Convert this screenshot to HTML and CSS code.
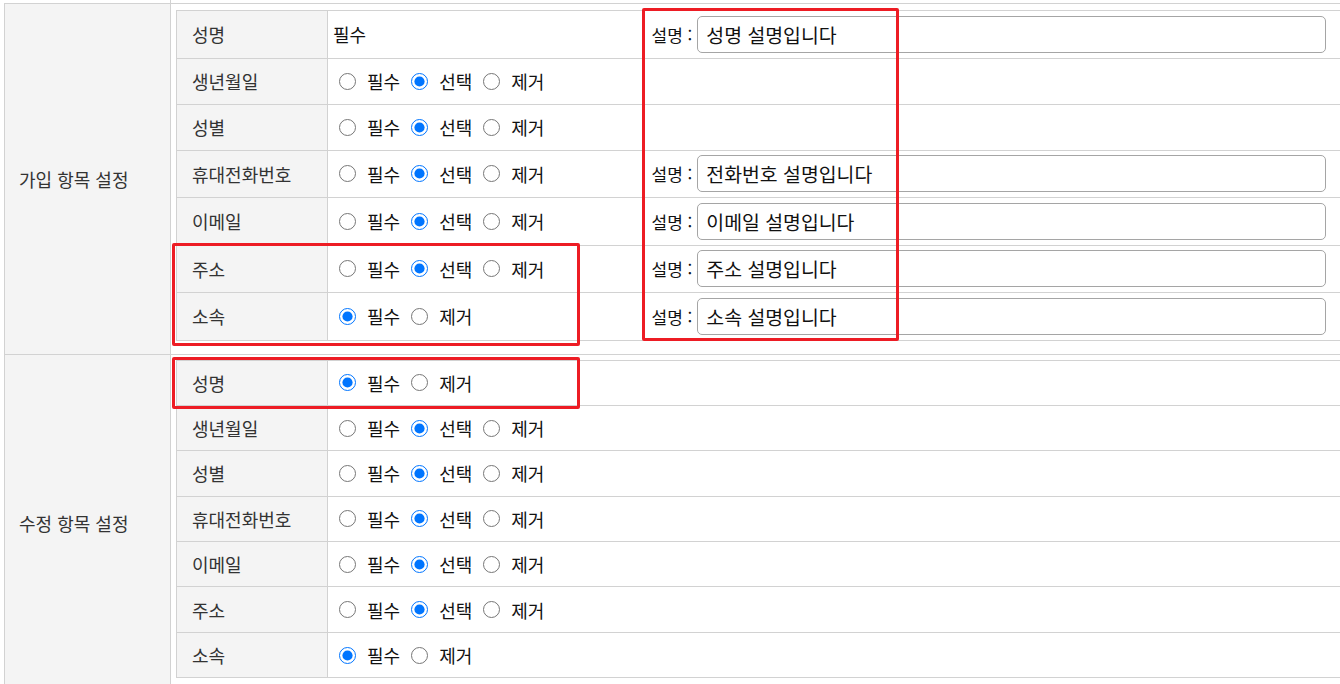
FILE: index.html
```
<!DOCTYPE html>
<html lang="ko">

<head>
    <meta charset="UTF-8">
    <title>회원 항목 설정</title>
    <link rel="stylesheet" href="styles.css">
</head>

<body>
    <div class="page">
        <table class="setting">
            <colgroup>
                <col class="col-head">
                <col>
            </colgroup>
            <tr class="prev">
                <td class="prev-head"></td>
                <td></td>
            </tr>
            <!-- 가입 항목 -->
            <tr>
                <th class="section">가입 항목 설정</th>
                <td class="section-body">
                    <table class="fields">
                        <colgroup>
                            <col class="col-label">
                            <col class="col-opt">
                            <col>
                        </colgroup>
                        <tr class="with-desc">
                            <th>성명</th>
                            <td class="opt"><span class="fixed">필수</span></td>
                            <td class="desc"><div class="desc-line"><span>설명 :</span><input type="text" value="성명 설명입니다"></div></td>
                        </tr>
                        <tr>
                            <th>생년월일</th>
                            <td class="opt">
                                <div class="opts">
                                    <label class="choice"><input type="radio" name="j_birth">필수</label>
                                    <label class="choice"><input type="radio" name="j_birth" checked>선택</label>
                                    <label class="choice"><input type="radio" name="j_birth">제거</label>
                                </div>
                            </td>
                            <td class="desc"></td>
                        </tr>
                        <tr>
                            <th>성별</th>
                            <td class="opt">
                                <div class="opts">
                                    <label class="choice"><input type="radio" name="j_sex">필수</label>
                                    <label class="choice"><input type="radio" name="j_sex" checked>선택</label>
                                    <label class="choice"><input type="radio" name="j_sex">제거</label>
                                </div>
                            </td>
                            <td class="desc"></td>
                        </tr>
                        <tr class="with-desc">
                            <th>휴대전화번호</th>
                            <td class="opt">
                                <div class="opts">
                                    <label class="choice"><input type="radio" name="j_phone">필수</label>
                                    <label class="choice"><input type="radio" name="j_phone" checked>선택</label>
                                    <label class="choice"><input type="radio" name="j_phone">제거</label>
                                </div>
                            </td>
                            <td class="desc"><div class="desc-line"><span>설명 :</span><input type="text" value="전화번호 설명입니다"></div></td>
                        </tr>
                        <tr class="with-desc">
                            <th>이메일</th>
                            <td class="opt">
                                <div class="opts">
                                    <label class="choice"><input type="radio" name="j_mail">필수</label>
                                    <label class="choice"><input type="radio" name="j_mail" checked>선택</label>
                                    <label class="choice"><input type="radio" name="j_mail">제거</label>
                                </div>
                            </td>
                            <td class="desc"><div class="desc-line"><span>설명 :</span><input type="text" value="이메일 설명입니다"></div></td>
                        </tr>
                        <tr class="with-desc">
                            <th>주소</th>
                            <td class="opt">
                                <div class="opts">
                                    <label class="choice"><input type="radio" name="j_addr">필수</label>
                                    <label class="choice"><input type="radio" name="j_addr" checked>선택</label>
                                    <label class="choice"><input type="radio" name="j_addr">제거</label>
                                </div>
                            </td>
                            <td class="desc"><div class="desc-line"><span>설명 :</span><input type="text" value="주소 설명입니다"></div></td>
                        </tr>
                        <tr class="with-desc">
                            <th>소속</th>
                            <td class="opt">
                                <div class="opts">
                                    <label class="choice"><input type="radio" name="j_org" checked>필수</label>
                                    <label class="choice"><input type="radio" name="j_org">제거</label>
                                </div>
                            </td>
                            <td class="desc"><div class="desc-line"><span>설명 :</span><input type="text" value="소속 설명입니다"></div></td>
                        </tr>
                    </table>
                </td>
            </tr>
            <!-- 수정 항목 -->
            <tr>
                <th class="section">수정 항목 설정</th>
                <td class="section-body section-edit">
                    <table class="fields edit">
                        <colgroup>
                            <col class="col-label">
                            <col>
                        </colgroup>
                        <tr>
                            <th>성명</th>
                            <td class="opt">
                                <div class="opts">
                                    <label class="choice"><input type="radio" name="e_name" checked>필수</label>
                                    <label class="choice"><input type="radio" name="e_name">제거</label>
                                </div>
                            </td>
                        </tr>
                        <tr>
                            <th>생년월일</th>
                            <td class="opt">
                                <div class="opts">
                                    <label class="choice"><input type="radio" name="e_birth">필수</label>
                                    <label class="choice"><input type="radio" name="e_birth" checked>선택</label>
                                    <label class="choice"><input type="radio" name="e_birth">제거</label>
                                </div>
                            </td>
                        </tr>
                        <tr>
                            <th>성별</th>
                            <td class="opt">
                                <div class="opts">
                                    <label class="choice"><input type="radio" name="e_sex">필수</label>
                                    <label class="choice"><input type="radio" name="e_sex" checked>선택</label>
                                    <label class="choice"><input type="radio" name="e_sex">제거</label>
                                </div>
                            </td>
                        </tr>
                        <tr>
                            <th>휴대전화번호</th>
                            <td class="opt">
                                <div class="opts">
                                    <label class="choice"><input type="radio" name="e_phone">필수</label>
                                    <label class="choice"><input type="radio" name="e_phone" checked>선택</label>
                                    <label class="choice"><input type="radio" name="e_phone">제거</label>
                                </div>
                            </td>
                        </tr>
                        <tr>
                            <th>이메일</th>
                            <td class="opt">
                                <div class="opts">
                                    <label class="choice"><input type="radio" name="e_mail">필수</label>
                                    <label class="choice"><input type="radio" name="e_mail" checked>선택</label>
                                    <label class="choice"><input type="radio" name="e_mail">제거</label>
                                </div>
                            </td>
                        </tr>
                        <tr>
                            <th>주소</th>
                            <td class="opt">
                                <div class="opts">
                                    <label class="choice"><input type="radio" name="e_addr">필수</label>
                                    <label class="choice"><input type="radio" name="e_addr" checked>선택</label>
                                    <label class="choice"><input type="radio" name="e_addr">제거</label>
                                </div>
                            </td>
                        </tr>
                        <tr>
                            <th>소속</th>
                            <td class="opt">
                                <div class="opts">
                                    <label class="choice"><input type="radio" name="e_org" checked>필수</label>
                                    <label class="choice"><input type="radio" name="e_org">제거</label>
                                </div>
                            </td>
                        </tr>
                    </table>
                </td>
            </tr>
        </table>

        <!-- 표시 박스 -->
        <div class="mark mark-desc"></div>
        <div class="mark mark-addr"></div>
        <div class="mark mark-edit"></div>
    </div>
</body>

</html>
```

FILE: styles.css
```
html,
body {
    overflow: hidden;
}

body {
    margin: 0;
    background-color: #fff;
    color: #111;
    font-family: "Noto Sans CJK KR", "Noto Sans", sans-serif;
    font-size: 18px;
}

.page {
    position: relative;
}

.setting {
    border-collapse: collapse;
    table-layout: fixed;
    width: 1420px;
    margin-left: 4px;
}

.col-head {
    width: 166px;
}

.setting .prev td {
    height: 3px;
    padding: 0;
    border-bottom: 1px solid #d2d2d2;
}

.setting .prev .prev-head {
    border-right: 1px solid #d2d2d2;
}

.section {
    padding: 0 0 0 14px;
    background-color: #f4f4f4;
    border: 1px solid #d2d2d2;
    color: #333;
    font-weight: normal;
    text-align: left;
    vertical-align: middle;
}

.section-body {
    padding: 6px 0 13px 5px;
    border: 1px solid #d2d2d2;
    vertical-align: top;
}

.section-body.section-edit {
    padding-top: 5px;
}

.fields {
    border-collapse: collapse;
    table-layout: fixed;
    width: 100%;
}

.col-label {
    width: 151px;
}

.col-opt {
    width: 316px;
}

.fields th,
.fields td {
    padding: 0;
    border-top: 1px solid #d2d2d2;
    border-bottom: 1px solid #d2d2d2;
    vertical-align: middle;
}

.fields th {
    padding-left: 15px;
    background-color: #f4f4f4;
    border-left: 1px solid #d2d2d2;
    border-right: 1px solid #d2d2d2;
    color: #333;
    font-weight: normal;
    text-align: left;
}

.fields tr {
    height: 46px;
}

.fields tr.with-desc {
    height: 47.5px;
}

.fields.edit tr {
    height: 45.4px;
}

.fields .opt {
    padding-left: 5px;
}

.opts {
    display: flex;
    align-items: center;
}

.choice {
    display: flex;
    align-items: center;
    margin-right: 5px;
}

.choice input[type="radio"] {
    width: 17px;
    height: 17px;
    margin: 0 11px 0 6px;
}

.fields .desc {
    padding-left: 8px;
}

.desc-line {
    display: flex;
    align-items: center;
    padding: 4px 0;
    font-size: 17px;
}

.desc-line span {
    margin-right: 5px;
}

.desc-line input[type="text"] {
    box-sizing: border-box;
    width: 629px;
    height: 37px;
    padding: 0 8px;
    border: 1px solid #a5a5a5;
    border-radius: 5px;
    outline: none;
    color: #111;
    font-family: "Noto Sans CJK KR", "Noto Sans", sans-serif;
    font-size: 19.4px;
}

/* 강조 표시 */
.mark {
    position: absolute;
    box-sizing: border-box;
    border: 3px solid #ed1c24;
    border-radius: 2px;
    pointer-events: none;
}

.mark-desc {
    left: 642px;
    top: 8px;
    width: 257px;
    height: 333px;
}

.mark-addr {
    left: 172px;
    top: 243px;
    width: 408px;
    height: 103px;
}

.mark-edit {
    left: 172px;
    top: 357px;
    width: 408px;
    height: 52px;
}
```
